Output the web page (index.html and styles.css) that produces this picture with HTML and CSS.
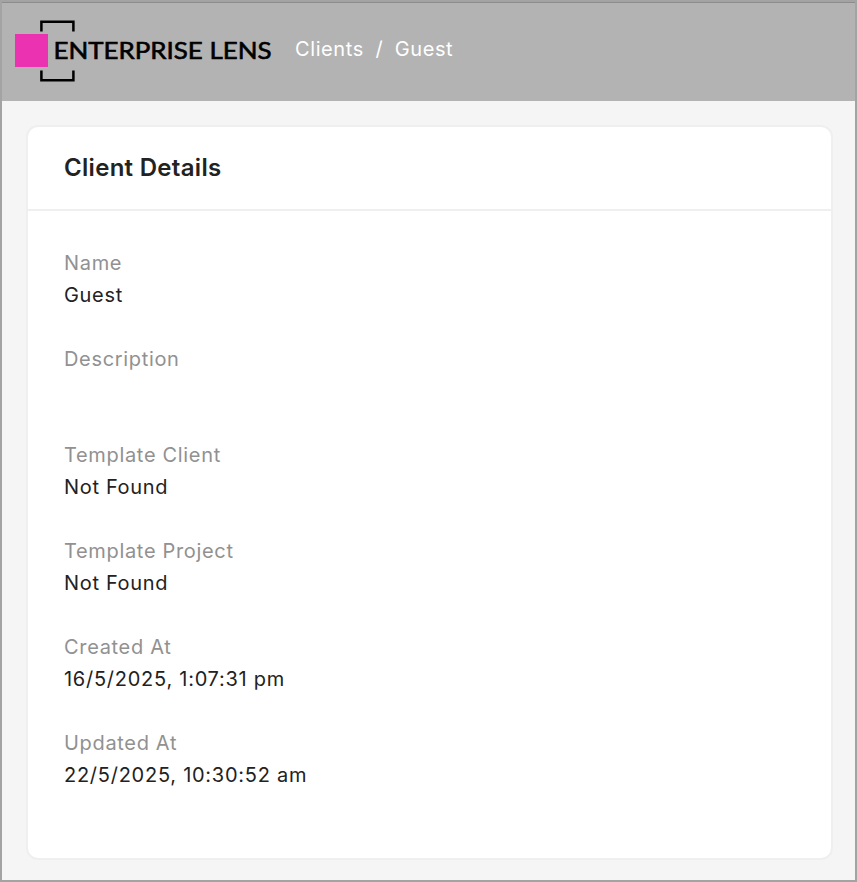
FILE: index.html
```html
<!DOCTYPE html>
<html lang="en">
<head>
    <meta charset="UTF-8">
    <meta name="viewport" content="width=device-width, initial-scale=1.0">
    <title>Enterprise Lens - Client Details</title>
    <link rel="stylesheet" href="styles.css">
</head>
<body>
    <header>
        <svg class="logo" width="260" height="64" viewBox="0 0 260 64" role="img" aria-label="Enterprise Lens">
            <path d="M27.4 12.5V2.7H59.4V12.5M27.4 51.5V61.2H59.4V51.5" fill="none" stroke="#000" stroke-width="2.5"/>
            <rect x="1" y="15" width="33" height="33" fill="#eb32b0"/>
            <text class="logo-text" x="39.5" y="40.3" textLength="218" lengthAdjust="spacingAndGlyphs">ENTERPRISE LENS</text>
        </svg>
        <nav>
            <a href="#">Clients</a>
            <span>/</span>
            <a href="#">Guest</a>
        </nav>
    </header>
    <main>
        <section class="card">
            <h2>Client Details</h2>
            <dl class="details">
                <div class="item">
                    <dt>Name</dt>
                    <dd>Guest</dd>
                </div>
                <div class="item">
                    <dt>Description</dt>
                    <dd></dd>
                </div>
                <div class="item">
                    <dt>Template Client</dt>
                    <dd>Not Found</dd>
                </div>
                <div class="item">
                    <dt>Template Project</dt>
                    <dd>Not Found</dd>
                </div>
                <div class="item">
                    <dt>Created At</dt>
                    <dd class="date">16/5/2025, 1:07:31 pm</dd>
                </div>
                <div class="item">
                    <dt>Updated At</dt>
                    <dd class="date">22/5/2025, 10:30:52 am</dd>
                </div>
            </dl>
        </section>
    </main>
</body>
</html>
```
FILE: styles.css
```css
* {
    margin: 0;
    padding: 0;
    box-sizing: border-box;
}
body {
    min-height: 882px;
    font-family: Inter, "Liberation Sans", sans-serif;
    font-size: 20px;
    line-height: 32px;
    letter-spacing: 0.67px;
    color: #222;
    background-color: #f5f5f5;
    border: 2px solid #a3a3a3;
}
header {
    display: flex;
    align-items: flex-start;
    height: 99px;
    padding: 16px 12px;
    background-color: #b3b3b3;
    border-top: 1px solid #8c8c8c;
}
.logo {
    display: block;
    flex: none;
}
.logo-text {
    font-family: Lato, sans-serif;
    font-size: 23.5px;
    font-weight: 400;
    letter-spacing: 0;
    fill: #000;
    stroke: #000;
    stroke-width: 0.6px;
}
nav {
    display: flex;
    gap: 11.5px;
    margin: 14px 0 0 21px;
    letter-spacing: 0.6px;
    color: #fff;
}
nav a {
    color: #fff;
    text-decoration: none;
}
main {
    padding: 24px 22px 20px 24px;
}
.card {
    background-color: #fff;
    border: 2px solid #efefef;
    border-radius: 12px;
}
.card h2 {
    height: 84px;
    padding: 0 36px;
    font-size: 24px;
    font-weight: 600;
    line-height: 82px;
    letter-spacing: 0.3px;
    border-bottom: 2px solid #efefef;
}
.details {
    padding: 36px 36px 35px;
}
.item {
    margin-bottom: 32px;
}
dt {
    color: #919191;
}
dd {
    min-height: 32px;
}
.date {
    letter-spacing: 0.74px;
}
```
